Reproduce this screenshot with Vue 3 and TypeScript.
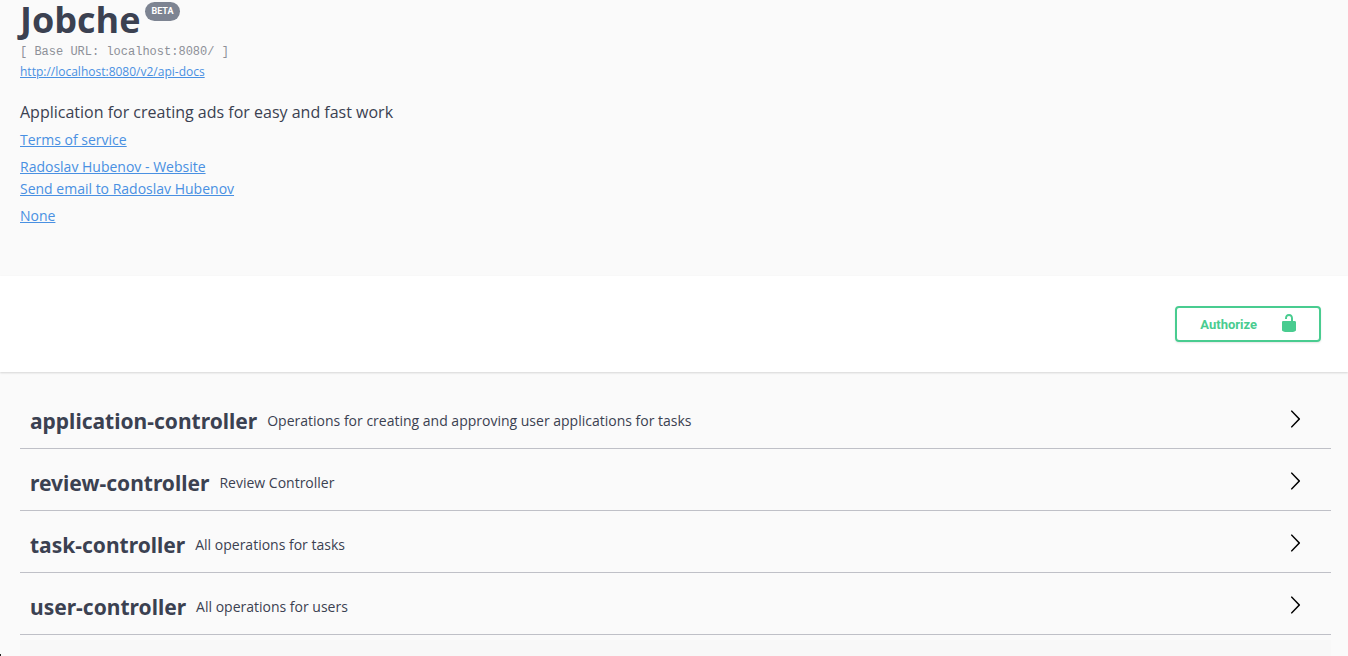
<script setup lang="ts">
interface Tag {
  name: string
  description: string
}

const tags: Tag[] = [
  { name: 'application-controller', description: 'Operations for creating and approving user applications for tasks' },
  { name: 'review-controller', description: 'Review Controller' },
  { name: 'task-controller', description: 'All operations for tasks' },
  { name: 'user-controller', description: 'All operations for users' },
]
</script>

<template>
  <div class="page">
    <header class="info">
      <h1 class="title">
        Jobche<span class="version">BETA</span>
      </h1>
      <div class="base-url">[ Base URL: localhost:8080/ ]</div>
      <a class="docs" href="#docs">http://localhost:8080/v2/api-docs</a>
      <p class="description">Application for creating ads for easy and fast work</p>
      <a class="link" href="#terms">Terms of service</a>
      <div class="contact">
        <a class="link" href="#website">Radoslav Hubenov - Website</a>
        <a class="link" href="#email">Send email to Radoslav Hubenov</a>
      </div>
      <a class="link" href="#license">None</a>
    </header>

    <section class="schemes">
      <button type="button" class="authorize">
        <span>Authorize</span>
        <svg width="20" height="20" viewBox="0 0 20 20" aria-hidden="true">
          <path d="M15.8 8H14V5.6C14 2.703 12.665 1 10 1 7.334 1 6 2.703 6 5.6V6h2v-.801C8 3.754 8.797 3 10 3c1.203 0 2 .754 2 2.199V8H4c-.553 0-1 .646-1 1.199V17c0 .549.428 1.139.951 1.307l1.197.387C5.672 18.861 6.55 19 7.1 19h5.8c.549 0 1.428-.139 1.951-.307l1.196-.387c.524-.167.953-.757.953-1.306V9.199C17 8.646 16.352 8 15.8 8z" />
        </svg>
      </button>
    </section>

    <main class="tags">
      <div v-for="tag in tags" :key="tag.name" class="tag">
        <h2 class="tag-name">{{ tag.name }}</h2>
        <p class="tag-text">{{ tag.description }}</p>
        <button type="button" class="expand" :aria-label="'Expand ' + tag.name">
          <svg width="20" height="20" viewBox="0 0 20 20" aria-hidden="true">
            <path d="M13.25 10L6.109 2.58c-.268-.27-.268-.707 0-.979.268-.27.701-.27.969 0l7.83 7.908c.268.271.268.709 0 .979l-7.83 7.908c-.268.271-.701.27-.969 0-.268-.269-.268-.707 0-.979L13.25 10z" />
          </svg>
        </button>
      </div>
      <div class="next-panel"></div>
    </main>
    <span class="corner"></span>
  </div>
</template>

<style>
body {
  background: #fafafa;
}
</style>

<style scoped>
.page {
  position: relative;
  height: 100vh;
  overflow: hidden;
  box-sizing: border-box;
  background: #fafafa;
  color: #3b4151;
  font-family: "Open Sans", sans-serif;
}

.info {
  display: flex;
  flex-direction: column;
  align-items: flex-start;
  padding: 0 20px 49px;
}

.title {
  display: flex;
  align-items: flex-start;
  gap: 5px;
  margin: 0;
  font-size: 36px;
  line-height: 40px;
  font-weight: 700;
}

.version {
  margin-top: 2px;
  padding: 0 6px;
  border-radius: 10px;
  background: #7d8492;
  color: #fff;
  font-family: Roboto, sans-serif;
  font-size: 9px;
  line-height: 19px;
  font-weight: 700;
}

.base-url {
  margin-top: 3px;
  color: #8d9098;
  font-family: "Liberation Mono", monospace;
  font-size: 12px;
  line-height: 19px;
}

.docs {
  color: #4990e2;
  font-size: 12px;
  line-height: 20px;
}

.description {
  margin: 19px 0 6px;
  font-size: 16px;
  line-height: 22px;
}

.link {
  color: #4990e2;
  font-size: 14px;
  line-height: 22px;
}

.contact {
  display: flex;
  flex-direction: column;
  align-items: flex-start;
  margin: 5px 0;
}

.schemes {
  display: flex;
  justify-content: flex-end;
  padding: 30px 27px;
  background: #fff;
  box-shadow: 0 1px 2px rgba(0, 0, 0, 0.15);
}

.authorize {
  display: flex;
  align-items: center;
  gap: 22px;
  height: 36px;
  padding: 0 20px 0 23px;
  border: 2px solid #49cc90;
  border-radius: 4px;
  background: transparent;
  box-shadow: 0 1px 2px rgba(0, 0, 0, 0.1);
  color: #49cc90;
  font-family: Roboto, sans-serif;
  font-size: 13px;
  font-weight: 700;
}

.authorize svg {
  padding-bottom: 2px;
  fill: #49cc90;
}

.tags {
  padding: 26px 17px 0 20px;
}

.tag {
  display: flex;
  align-items: center;
  gap: 10px;
  height: 46px;
  margin-bottom: 11px;
  padding: 0 26px 4px 10px;
  border-bottom: 1px solid #bfc0c7;
}

.tag-name {
  margin: 0;
  font-family: "Noto Sans", sans-serif;
  font-size: 21px;
  line-height: 30px;
  font-weight: 700;
}

.tag-text {
  flex: 1;
  margin: 0;
  font-size: 14px;
  line-height: 20px;
}

.expand {
  display: flex;
  padding: 0 0 4px;
  border: 0;
  background: none;
}

.next-panel {
  height: 40px;
  margin-top: -6px;
  background: #f8f8f8;
}

.corner {
  position: absolute;
  bottom: 0;
  left: 0;
  width: 1px;
  height: 2px;
  background: #222;
}
</style>
